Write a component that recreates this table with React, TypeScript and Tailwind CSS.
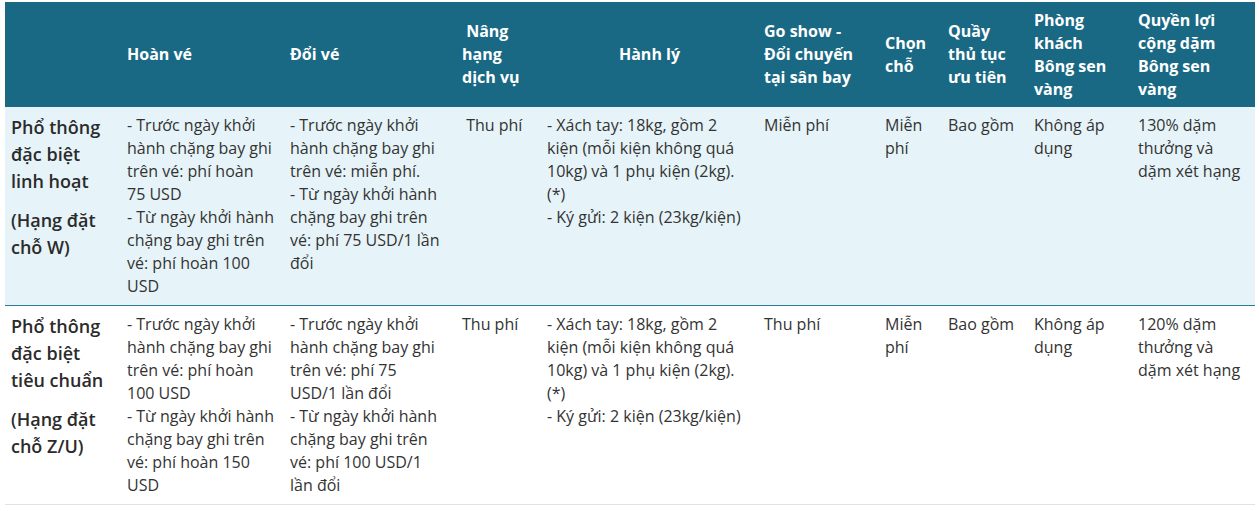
import { memo, Fragment } from 'react'

interface FareRow {
    name: string[]
    code: string[]
    cells: string[][]
}

// each cell is written line by line so it wraps the same way as the site
const rows: FareRow[] = [
    {
        name: ['Phổ thông', 'đặc biệt', 'linh hoạt'],
        code: ['(Hạng đặt', 'chỗ W)'],
        cells: [
            ['- Trước ngày khởi', 'hành chặng bay ghi', 'trên vé: phí hoàn', '75 USD', '- Từ ngày khởi hành', 'chặng bay ghi trên', 'vé: phí hoàn 100', 'USD'],
            ['- Trước ngày khởi', 'hành chặng bay ghi', 'trên vé: miễn phí.', '- Từ ngày khởi hành', 'chặng bay ghi trên', 'vé: phí 75 USD/1 lần', 'đổi'],
            ['\u00a0Thu phí'],
            ['- Xách tay: 18kg, gồm 2', 'kiện (mỗi kiện không quá', '10kg) và 1 phụ kiện (2kg).', '(*)', '- Ký gửi: 2 kiện (23kg/kiện)'],
            ['Miễn phí'],
            ['Miễn', 'phí'],
            ['Bao gồm'],
            ['Không áp', 'dụng'],
            ['130% dặm', 'thưởng và', 'dặm xét hạng'],
        ],
    },
    {
        name: ['Phổ thông', 'đặc biệt', 'tiêu chuẩn'],
        code: ['(Hạng đặt', 'chỗ Z/U)'],
        cells: [
            ['- Trước ngày khởi', 'hành chặng bay ghi', 'trên vé: phí hoàn', '100 USD', '- Từ ngày khởi hành', 'chặng bay ghi trên', 'vé: phí hoàn 150', 'USD'],
            ['- Trước ngày khởi', 'hành chặng bay ghi', 'trên vé: phí 75', 'USD/1 lần đổi', '- Từ ngày khởi hành', 'chặng bay ghi trên', 'vé: phí 100 USD/1', 'lần đổi'],
            ['Thu phí'],
            ['- Xách tay: 18kg, gồm 2', 'kiện (mỗi kiện không quá', '10kg) và 1 phụ kiện (2kg).', '(*)', '- Ký gửi: 2 kiện (23kg/kiện)'],
            ['Thu phí'],
            ['Miễn', 'phí'],
            ['Bao gồm'],
            ['Không áp', 'dụng'],
            ['120% dặm', 'thưởng và', 'dặm xét hạng'],
        ],
    },
]

const headers: string[][] = [
    ['Hoàn vé'],
    ['Đổi vé'],
    ['\u00a0Nâng', 'hạng', 'dịch vụ'],
    ['Hành lý'],
    ['Go show -', 'Đổi chuyến', 'tại sân bay'],
    ['Chọn', 'chỗ'],
    ['Quầy', 'thủ tục', 'ưu tiên'],
    ['Phòng', 'khách', 'Bông sen', 'vàng'],
    ['Quyền lợi', 'cộng dặm', 'Bông sen', 'vàng'],
]

const Lines = ({ lines }: { lines: string[] }): JSX.Element => (
    <>
        {lines.map((l, k) => (
            <Fragment key={k}>
                {k > 0 && <br />}
                {l}
            </Fragment>
        ))}
    </>
)

const th = 'px-[6px] py-[6px] align-middle text-left font-bold text-white whitespace-nowrap'
const td = 'px-[6px] pt-[7px] pb-[7px] align-top whitespace-nowrap'

const App = (): JSX.Element => {
    return (
        <div className="bg-white pl-[5px] pr-[4px] pt-[2px] font-['Open_Sans',sans-serif] text-[16px] leading-[23px] text-[#333]">
            <table className="w-[1250px] table-fixed border-collapse">
                <colgroup>
                    <col className="w-[116px]" />
                    <col className="w-[163px]" />
                    <col className="w-[172px]" />
                    <col className="w-[85px]" />
                    <col className="w-[217px]" />
                    <col className="w-[121px]" />
                    <col className="w-[63px]" />
                    <col className="w-[86px]" />
                    <col className="w-[104px]" />
                    <col className="w-[123px]" />
                </colgroup>
                <thead>
                    <tr className="h-[105px] bg-[#1a6984]">
                        <th className={th}></th>
                        {headers.map((h, i) => (
                            <th key={i} className={i === 3 ? `${th} !text-center` : th}>
                                <Lines lines={h} />
                            </th>
                        ))}
                    </tr>
                </thead>
                <tbody>
                    {rows.map((row, i) => (
                        <tr
                            key={i}
                            className={i === 0 ? 'bg-[#e6f3f8] border-b border-[#2b7a98]' : 'bg-white border-b border-[#dde3e6]'}
                        >
                            <td className={`${td} text-[18px] leading-[27px] font-semibold text-[#2b2b2b]`}>
                                <p><Lines lines={row.name} /></p>
                                <p className="mt-[12px]"><Lines lines={row.code} /></p>
                            </td>
                            {row.cells.map((c, k) => (
                                <td key={k} className={td}>
                                    <Lines lines={c} />
                                </td>
                            ))}
                        </tr>
                    ))}
                </tbody>
            </table>
        </div>
    )
}

export default memo(App)
